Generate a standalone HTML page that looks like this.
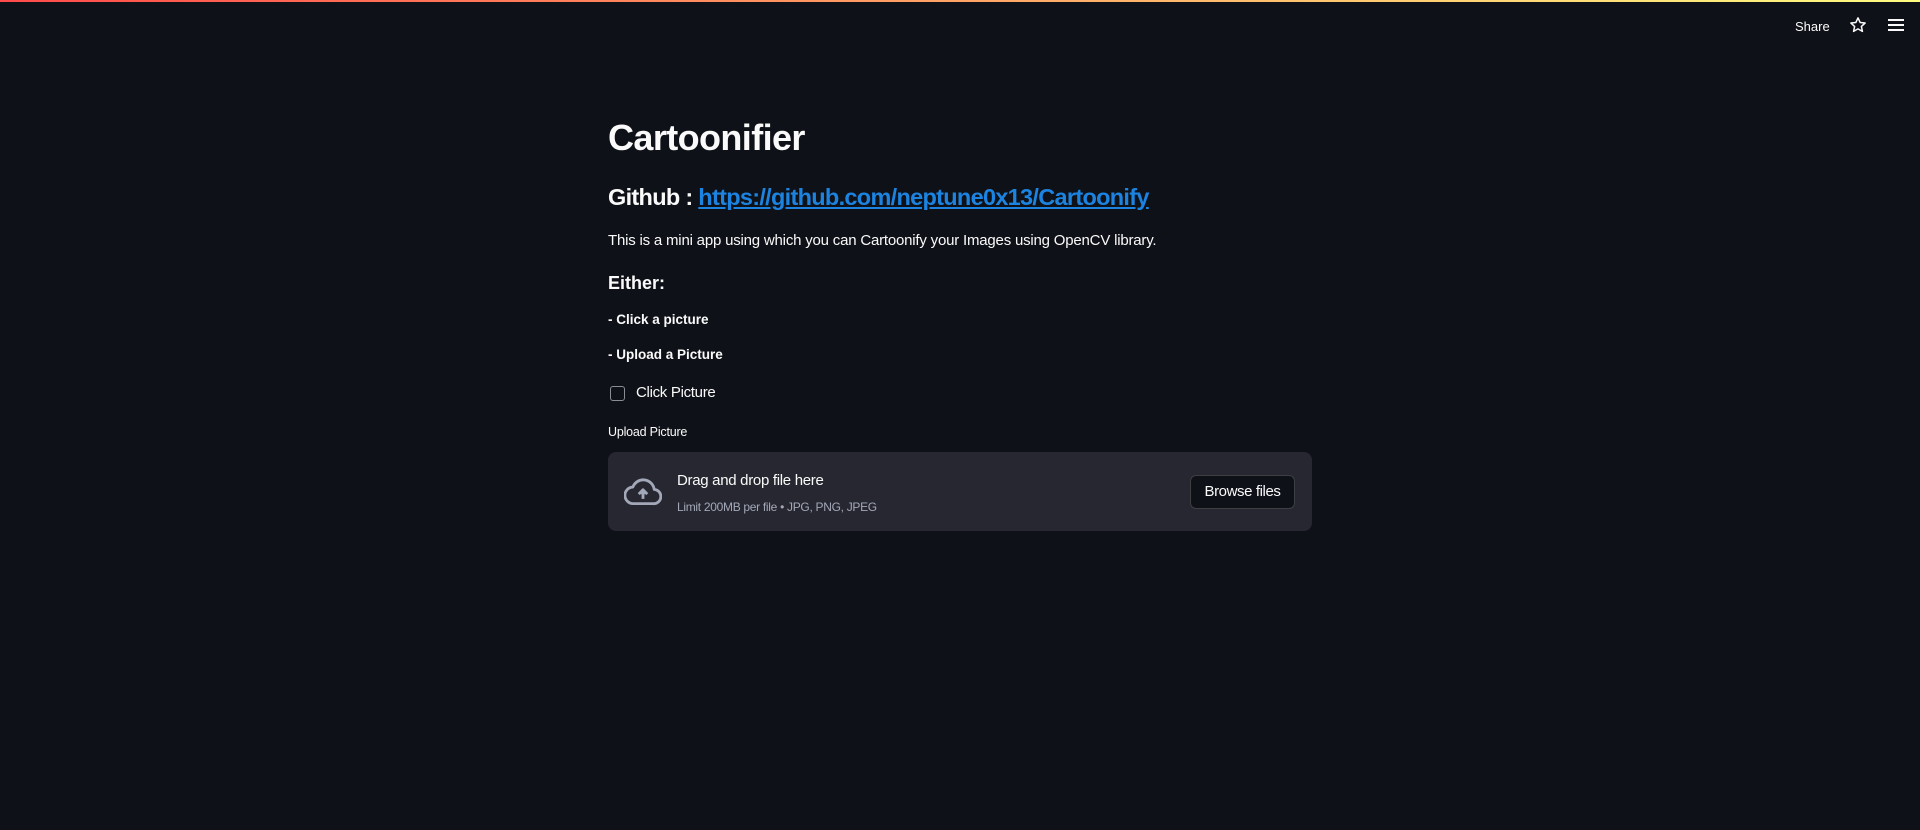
<!DOCTYPE html>
<html><head><meta charset="utf-8"><style>
*{margin:0;padding:0;box-sizing:border-box}
body{width:1920px;height:830px;background:#0e1117;color:#fafafa;font-family:"Liberation Sans",sans-serif;position:relative;overflow:hidden}
.bar{position:absolute;top:0;left:0;width:1920px;height:2px;background:linear-gradient(90deg,#ff4b4b,#fffd80)}
.a{position:absolute;left:608px;white-space:nowrap}
h1{font-size:36px;font-weight:700;top:117px;letter-spacing:-0.6px}
h3{font-size:23.5px;font-weight:700;top:184px;letter-spacing:-0.7px}
h3 a{color:#1c83e1;text-decoration:underline}
.p{font-size:15px;top:232px;letter-spacing:-0.2px}
h4{font-size:18px;font-weight:700;top:273px}
.b{font-size:13.5px;font-weight:700}
.cb{position:absolute;left:610px;top:386px;width:15px;height:15px;border:1px solid #8a8d96;border-radius:3px}
.drop{position:absolute;left:608px;top:452px;width:704px;height:79px;background:#262730;border-radius:8px}
.btn{position:absolute;left:1190px;top:475px;width:105px;height:34px;border:1px solid rgba(250,250,250,.2);border-radius:6px;background:#0e1117;font-size:15px;text-align:center;line-height:32px;letter-spacing:-0.4px}
</style></head><body>
<div class="bar"></div>
<div style="position:absolute;left:1795px;top:19px;font-size:13px">Share</div>
<svg style="position:absolute;left:1849px;top:16px" width="18" height="18" viewBox="0 0 24 24" fill="none" stroke="#fafafa" stroke-width="2" stroke-linejoin="round"><path d="M12 2.5l2.9 6.2 6.6.7-5 4.5 1.4 6.6L12 17.2l-5.9 3.3 1.4-6.6-5-4.5 6.6-.7z"/></svg>
<svg style="position:absolute;left:1888px;top:18px" width="16" height="14" viewBox="0 0 16 14" fill="#fafafa"><rect y="1" width="16" height="2"/><rect y="6" width="16" height="2"/><rect y="11" width="16" height="2"/></svg>
<h1 class="a">Cartoonifier</h1>
<h3 class="a">Github : <a>https://github.com/neptune0x13/Cartoonify</a></h3>
<div class="a p">This is a mini app using which you can Cartoonify your Images using OpenCV library.</div>
<h4 class="a">Either:</h4>
<div class="a b" style="top:312px">- Click a picture</div>
<div class="a b" style="top:347px">- Upload a Picture</div>
<div class="cb"></div>
<div class="a" style="left:636px;top:384px;font-size:15px;letter-spacing:-0.3px">Click Picture</div>
<div class="a" style="top:425px;font-size:12.5px;letter-spacing:-0.2px">Upload Picture</div>
<div class="drop"></div>
<svg style="position:absolute;left:624px;top:476px" width="38" height="30" viewBox="0 0 24 19" fill="none" stroke="#a3a8b8" stroke-width="1.8" stroke-linejoin="round"><path d="M6 17.5h12.5a4.5 4.5 0 0 0 .6-9A7 7 0 0 0 5.6 7 5.2 5.2 0 0 0 6 17.5z"/><path d="M12 14.5V9M9.3 11.5L12 8.7l2.7 2.8" fill="#a3a8b8"/></svg>
<div class="a" style="left:677px;top:472px;font-size:15px;letter-spacing:-0.3px">Drag and drop file here</div>
<div class="a" style="left:677px;top:500px;font-size:12px;color:#a3a8b8;letter-spacing:-0.3px">Limit 200MB per file • JPG, PNG, JPEG</div>
<div class="btn">Browse files</div>
</body></html>
